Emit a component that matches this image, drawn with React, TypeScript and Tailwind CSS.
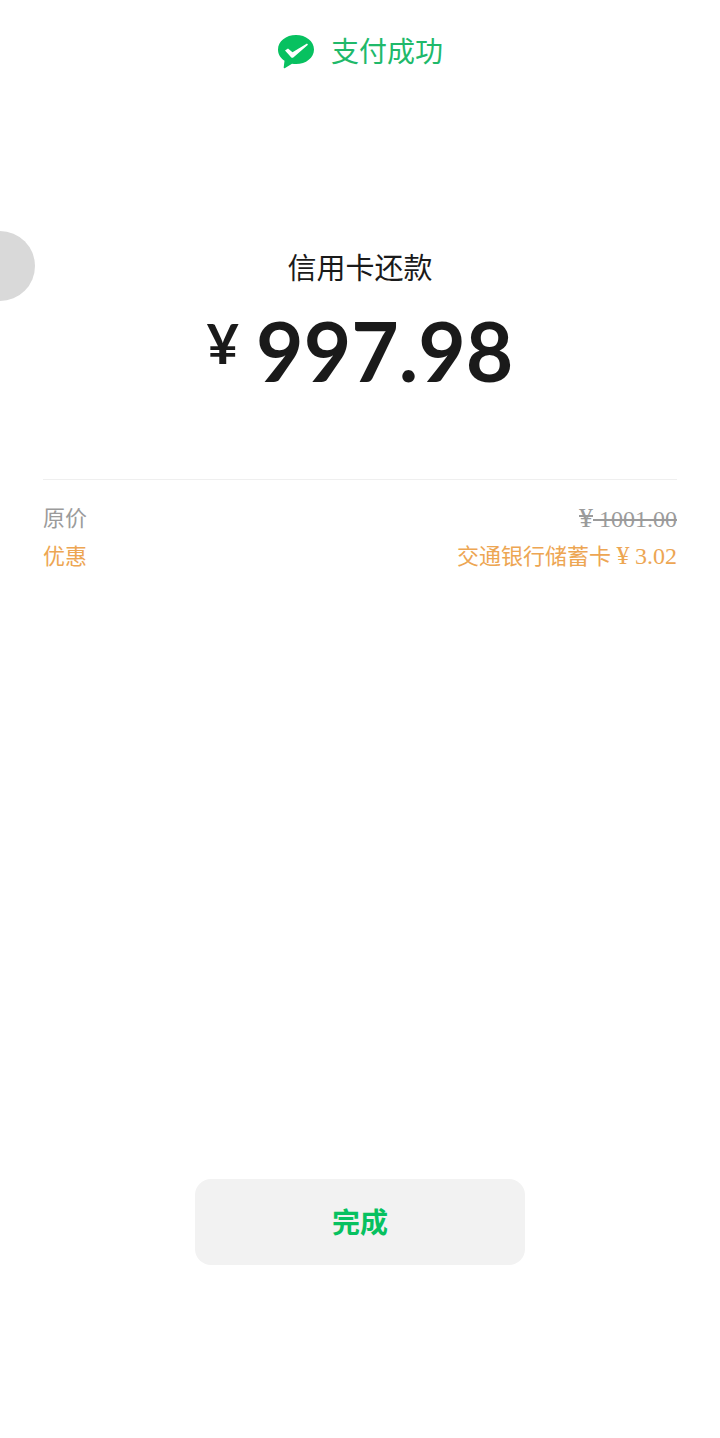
export default function App() {
  const cjk = 'font-["Liberation_Serif","Noto_Sans_CJK_SC",serif]';
  return (
    <div className={`relative h-[1438px] w-[720px] overflow-hidden bg-white ${cjk}`}>
      {/* floating ball at the screen edge */}
      <div className="absolute left-[-35px] top-[231px] h-[70px] w-[70px] rounded-full bg-[#d9d9d9]" />

      <div className="flex h-[104px] items-center justify-center gap-[16px]">
        <svg width="38" height="36" viewBox="0 0 38 36">
          <path
            d="M19 1C9 1 1 7.200 1 15.500c0 4.700 2.500 8.700 6.500 11.300l-.8 6.700c-.1.700.5 1 1 .7l7.300-4.500c1.300.3 2.600.4 4 .4 10 0 18-6.400 18-14.600S29 1 19 1z"
            fill="#07c160"
          />
          <path d="M8 16.500l3-2 4.500 3.700L30 9.500l1 1.200L16.300 23.500c-.7.500-1.700.4-2.200-.3z" fill="#fff" />
        </svg>
        <span className="mt-[1px] text-[28px] leading-none text-[#20b96a]">支付成功</span>
      </div>

      <div className="mt-[146px] text-center text-[29px] leading-[38px] text-[#1a1a1a]">信用卡还款</div>

      <div className="mt-[17px] flex h-[90px] items-center justify-center gap-[17px] font-['Lato',sans-serif] text-[#1a1a1a]">
        <span className="mb-[14px] text-[56px] font-bold leading-none">¥</span>
        <span className="text-[82px] font-bold leading-none">997.98</span>
      </div>

      <div className="mx-[43px] mt-[84px] border-t border-[#efefef] pt-[20px] text-[22px] leading-[38px]">
        <div className="flex justify-between text-[#9b9b9b]">
          <span>原价</span>
          <span className="text-[24px] line-through"><span className="text-[28px] leading-none">¥</span> 1001.00</span>
        </div>
        <div className="flex justify-between text-[#eda653]">
          <span>优惠</span>
          <span>
            交通银行储蓄卡 <span className="text-[26px] leading-none">¥</span> <span className="text-[24px] leading-none">3.02</span>
          </span>
        </div>
      </div>

      <div className="mt-[603px] flex justify-center">
        <button className="h-[86px] w-[330px] rounded-[16px] bg-[#f2f2f2] pt-[3px] text-[28px] font-bold text-[#07c160]">
          完成
        </button>
      </div>
    </div>
  );
}
